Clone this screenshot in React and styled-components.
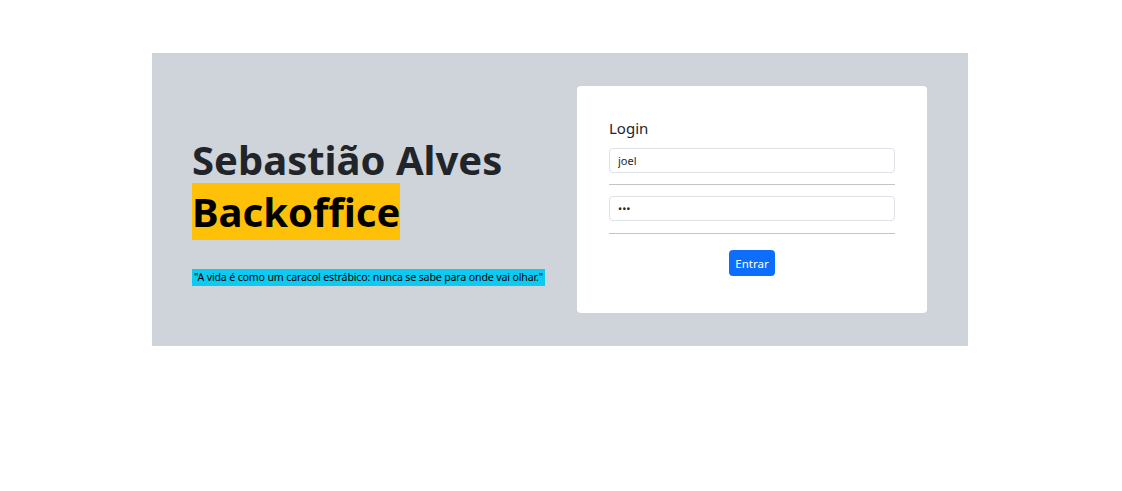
import React from "react";
import styled, { createGlobalStyle } from "styled-components";

const Global = createGlobalStyle`
  body {
    margin: 0;
    background: #fff;
    font-family: "Noto Sans", "Open Sans", sans-serif;
    color: #212529;
  }
  * { box-sizing: border-box; }
`;

const Panel = styled.section`
  width: 816px;
  margin: 53px 0 0 calc(50% - 409px);
  background: #ced4da;
  display: flex;
  align-items: flex-start;
  justify-content: space-between;
  padding: 33px 41px 33px 40px;
`;

const Intro = styled.div`
  display: flex;
  flex-direction: column;
  align-items: flex-start;
  width: 360px;
  padding-top: 48px;
`;

const Title = styled.h1`
  margin: 0;
  font-size: 40px;
  font-weight: 700;
  line-height: 52px;
  color: #212529;
`;

const Highlight = styled.span`
  background: #ffc107;
  color: #000;
  padding: 1px 0 1px;
`;

const Quote = styled.p`
  margin: 31px 0 0;
  font-size: 10.6px;
  line-height: 17px;
  background: #0dcaf0;
  color: #000;
  padding: 0 2px;
  white-space: nowrap;
  letter-spacing: -0.15px;
`;

const Card = styled.form`
  width: 350px;
  background: #fff;
  border-radius: 4px;
  padding: 30px 32px 37px;
  display: flex;
  flex-direction: column;
`;

const Label = styled.label`
  font-size: 15px;
  line-height: 24px;
  color: #212529;
  margin-bottom: 8px;
`;

const Input = styled.input`
  height: 25px;
  width: 100%;
  border: 1px solid #dee2e6;
  border-radius: 4px;
  padding: 0 8px;
  font-family: inherit;
  font-size: 11px;
  color: #212529;
  background: #fff;
  outline: none;
`;

const Rule = styled.hr`
  width: 100%;
  border: 0;
  border-top: 1px solid #c4c4c4;
  margin: ${(p) => p.$top}px 0 ${(p) => p.$bottom}px;
`;

const Button = styled.button`
  align-self: center;
  height: 26px;
  padding: 0 6px;
  border: 0;
  border-radius: 4px;
  background: #0d6efd;
  color: #fff;
  font-family: inherit;
  font-size: 11.5px;
  cursor: pointer;
`;

export default function App() {
  return (
    <>
      <Global />
      <Panel>
        <Intro>
          <Title>
            Sebastião Alves
            <br />
            <Highlight>Backoffice</Highlight>
          </Title>
          <Quote>"A vida é como um caracol estrábico: nunca se sabe para onde vai olhar."</Quote>
        </Intro>
        <Card onSubmit={(e) => e.preventDefault()}>
          <Label>Login</Label>
          <Input type="text" defaultValue="joel" />
          <Rule $top={11} $bottom={11} />
          <Input type="password" defaultValue="abc" />
          <Rule $top={12} $bottom={16} />
          <Button type="submit">Entrar</Button>
        </Card>
      </Panel>
    </>
  );
}
